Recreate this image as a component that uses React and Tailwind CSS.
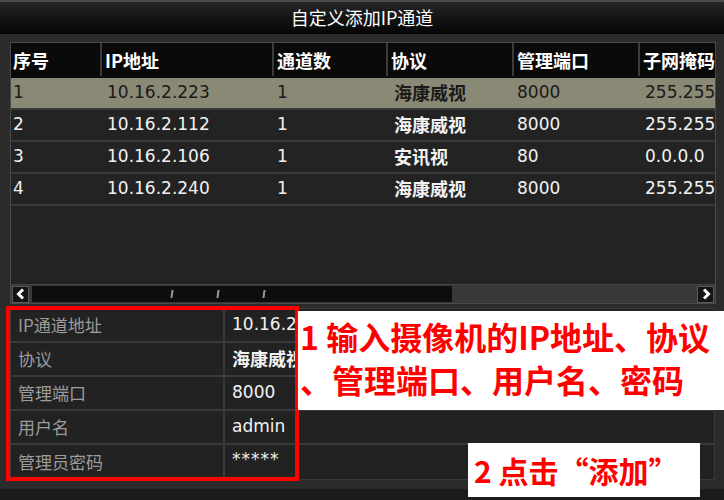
const rows = [
  ['1', '10.16.2.223', '1', '海康威视', '8000', '255.255.255.0'],
  ['2', '10.16.2.112', '1', '海康威视', '8000', '255.255.255.0'],
  ['3', '10.16.2.106', '1', '安讯视', '80', '0.0.0.0'],
  ['4', '10.16.2.240', '1', '海康威视', '8000', '255.255.255.0'],
];

const headers = ['序号', 'IP地址', '通道数', '协议', '管理端口', '子网掩码'];

const form = [
  ['IP通道地址', '10.16.2.223'],
  ['协议', '海康威视'],
  ['管理端口', '8000'],
  ['用户名', 'admin'],
  ['管理员密码', '*****'],
];

function Chevron({ dir }) {
  return (
    <svg width="10" height="12" viewBox="0 0 10 12">
      {dir === 'left' ? (
        <polyline points="7,1.5 2.5,6 7,10.5" fill="none" stroke="#ffffff" strokeWidth="3" strokeLinejoin="miter" />
      ) : (
        <polyline points="3,1.5 7.5,6 3,10.5" fill="none" stroke="#ffffff" strokeWidth="3" strokeLinejoin="miter" />
      )}
    </svg>
  );
}

export default function App() {
  return (
    <div className="relative w-[724px] h-[500px] overflow-hidden bg-[#2b2b2b] font-['DejaVu_Sans','Noto_Sans_CJK_SC',sans-serif]">
      <div className="h-[34px] pb-[3px] border-t-2 border-[#4a4a4a] bg-linear-to-b from-[#262626] to-[#060606] flex items-center justify-center text-white text-[18px] leading-none font-['Noto_Sans_CJK_SC',sans-serif]">
        自定义添加IP通道
      </div>

      <div className="pl-[10px] pr-[8px] pt-[8px]">
        <div className="border border-[#4a4a4a] bg-[#232323]">
          <div className="grid grid-cols-[89px_172px_114px_126px_126px_1fr] h-[35px] pb-[2px] bg-[#0a0a0a] text-white text-[18px] leading-none font-bold font-['Noto_Sans_CJK_SC',sans-serif] overflow-hidden">
            {headers.map((h, i) => (
              <div
                key={h}
                className={`flex items-center whitespace-nowrap overflow-hidden ${i === 0 ? 'pl-[2px]' : 'pl-[3px] border-l-2 border-[#3c3c3c]'}`}
              >
                {h}
              </div>
            ))}
          </div>

          <div className="h-[206px]">
            {rows.map((r, ri) => (
              <div
                key={ri}
                className={`grid grid-cols-[89px_172px_114px_126px_126px_1fr] h-[32px] border-b-2 border-[#3a3a3a] text-[17px] overflow-hidden ${ri === 0 ? 'bg-[#8a8976] text-[#1a1a1a]' : 'text-[#f2f2f2]'}`}
              >
                <div className="flex items-center pl-[2px]">{r[0]}</div>
                <div className="flex items-center pl-[7px]">{r[1]}</div>
                <div className="flex items-center pl-[5px]">{r[2]}</div>
                <div className="flex items-center pl-[8px] pb-[3px] font-bold text-[18px] leading-none font-['Noto_Sans_CJK_SC',sans-serif]">{r[3]}</div>
                <div className="flex items-center pl-[5px]">{r[4]}</div>
                <div className="flex items-center pl-[7px] whitespace-nowrap overflow-hidden">{r[5]}</div>
              </div>
            ))}
          </div>

          <div className="h-[19px] flex items-center bg-[#383838] border-t border-[#444]">
            <div className="ml-[1px] w-[17px] h-[17px] bg-[#141414] border border-[#5a5a5a] flex items-center justify-center">
              <Chevron dir="left" />
            </div>
            <div className="ml-[3px] w-[420px] h-[16px] bg-[#0d0d0d] flex items-center pl-[139px] gap-[44px]">
              <div className="w-[2px] h-[8px] bg-[#9a9a9a] skew-x-[-8deg]" />
              <div className="w-[2px] h-[8px] bg-[#9a9a9a] skew-x-[-8deg]" />
              <div className="w-[2px] h-[8px] bg-[#9a9a9a] skew-x-[-8deg]" />
            </div>
            <div className="flex-1" />
            <div className="mr-[1px] w-[17px] h-[17px] bg-[#141414] border border-[#5a5a5a] flex items-center justify-center">
              <Chevron dir="right" />
            </div>
          </div>
        </div>

        <div className="mt-[4px] border border-[#3a3a3a] bg-[#222222] mr-[1px]">
          {form.map(([label, value], i) => (
            <div
              key={label}
              className={`grid grid-cols-[212px_1fr] h-[34px] ${i < form.length - 1 ? 'border-b-2 border-[#3a3a3a]' : ''}`}
            >
              <div className="flex items-center pl-[7px] pb-[2px] text-[#9c9c9c] text-[17px] leading-none font-['Noto_Sans_CJK_SC',sans-serif] whitespace-nowrap">
                {label}
              </div>
              <div className={`flex items-center pl-[7px] border-l-2 border-[#3a3a3a] text-[#f2f2f2] whitespace-nowrap overflow-hidden ${i === 1 ? "font-bold text-[18px] leading-none pb-[3px] font-['Noto_Sans_CJK_SC',sans-serif]" : 'text-[17px]'} ${i === 4 ? 'text-[12px] tracking-[1px] pb-[4px]' : ''}`}>
                {value}
              </div>
            </div>
          ))}
        </div>
      </div>

      <div className="absolute left-0 right-0 top-[489px] bottom-0 bg-[#1c1c1c]" />

      <div className="absolute left-[6px] top-[306px] w-[293px] h-[175px] border-4 border-[#ff0000]" />

      <div className="absolute left-[298px] top-[311px] w-[426px] h-[99px] bg-white pt-[4px] pl-[2px] text-[#ff0000] text-[32px] leading-[43px] font-bold font-['Noto_Sans_CJK_SC',sans-serif] whitespace-nowrap">
        <div>1 输入摄像机的IP地址、协议</div>
        <div>、管理端口、用户名、密码</div>
      </div>

      <div className="absolute left-[468px] top-[443px] w-[232px] h-[54px] bg-white pl-[6px] flex items-center text-[#ff0000] text-[30px] font-bold font-['Noto_Sans_CJK_SC',sans-serif] whitespace-nowrap">
        2 点击“添加”
      </div>
    </div>
  );
}
